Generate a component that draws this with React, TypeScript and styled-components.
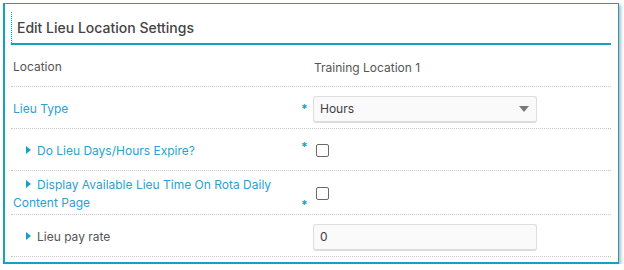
import * as React from "react";
import styled, { createGlobalStyle } from "styled-components";

const teal = "#17a0c6";
const blue = "#2c9fd3";

const GlobalStyle = createGlobalStyle`
  body {
    margin: 0;
    background: #fff;
    font-family: Inter, "Noto Sans", sans-serif;
  }
`;

const Panel = styled.div`
  margin: 3px 0 0 3px;
  width: 616px;
  height: 261px;
  box-sizing: border-box;
  border: 1px solid ${teal};
  border-left-width: 2px;
  border-bottom-width: 2px;
  box-shadow: 2px 2px 3px rgba(0, 0, 0, 0.28);
  padding: 8px 7px 0 6px;
  background: #fff;
`;

const Header = styled.div`
  height: 31px;
  border-bottom: 2px solid ${teal};
  display: flex;
  align-items: center;
`;

const Title = styled.h2`
  margin: 0;
  height: 100%;
  display: flex;
  align-items: center;
  padding-left: 5px;
  border-left: 1px dotted ${teal};
  font-size: 14px;
  font-weight: 500;
  color: #444;
`;

const Row = styled.div<{ $tall?: boolean }>`
  display: grid;
  grid-template-columns: 302px 224px;
  align-items: center;
  padding-top: 3px;
  min-height: ${(p) => (p.$tall ? 40 : 38)}px;
  border-bottom: 1px dotted #c8c8c8;
  font-size: 12px;
`;

const LabelCell = styled.div`
  display: flex;
  align-items: center;
  padding-left: 2px;
  height: 100%;
`;

const LabelText = styled.div<{ $accent?: boolean; $sub?: boolean }>`
  flex: 1;
  line-height: 18.5px;
  color: ${(p) => (p.$accent ? blue : "#555")};
  text-indent: ${(p) => (p.$sub ? "13px" : "0")};
  padding-right: 14px;
`;

const Arrow = styled.span`
  display: inline-block;
  width: 0;
  height: 0;
  border-left: 5px solid ${teal};
  border-top: 4px solid transparent;
  border-bottom: 4px solid transparent;
  margin-right: 6px;
  vertical-align: 0.5px;
  text-indent: 0;
`;

const Star = styled.span<{ $at?: "top" | "bottom" }>`
  width: 12px;
  color: ${teal};
  font-size: 12px;
  font-weight: 700;
  align-self: ${(p) => (p.$at === "bottom" ? "flex-end" : "center")};
  margin-top: ${(p) => (p.$at === "top" ? "-8px" : "0")};
  margin-bottom: ${(p) => (p.$at === "bottom" ? "3px" : "0")};
  line-height: 12px;
`;

const Value = styled.div`
  color: #555;
  padding-left: 1px;
`;

const Field = styled.div`
  height: 27px;
  box-sizing: border-box;
  background: #fafafa;
  border: 1px solid #dedede;
  border-bottom: 2px solid #dcdcdc;
  border-radius: 3px;
  display: flex;
  align-items: center;
  justify-content: space-between;
  padding: 0 7px 0 6px;
  font-size: 12px;
  color: #3d3d4a;
`;

const Caret = styled.span`
  width: 0;
  height: 0;
  border-top: 6px solid #7a7a7a;
  border-left: 5px solid transparent;
  border-right: 5px solid transparent;
`;

const Check = styled.span`
  display: block;
  width: 13px;
  height: 13px;
  box-sizing: border-box;
  border: 1px solid #6a6a6a;
  border-radius: 2px;
  margin: -2px 0 0 3px;
  background: #fff;
`;

export default function App() {
  return (
    <Panel>
      <GlobalStyle />
      <Header>
        <Title>Edit Lieu Location Settings</Title>
      </Header>
      <Row>
        <LabelCell>
          <LabelText>Location</LabelText>
        </LabelCell>
        <Value>Training Location 1</Value>
      </Row>
      <Row>
        <LabelCell>
          <LabelText $accent>Lieu Type</LabelText>
          <Star>*</Star>
        </LabelCell>
        <Field>
          Hours
          <Caret />
        </Field>
      </Row>
      <Row>
        <LabelCell>
          <LabelText $accent $sub>
            <Arrow />
            Do Lieu Days/Hours Expire?
          </LabelText>
          <Star $at="top">*</Star>
        </LabelCell>
        <Check />
      </Row>
      <Row $tall>
        <LabelCell>
          <LabelText $accent $sub>
            <Arrow />
            Display Available Lieu Time On Rota Daily Content Page
          </LabelText>
          <Star $at="bottom">*</Star>
        </LabelCell>
        <Check />
      </Row>
      <Row>
        <LabelCell>
          <LabelText $sub>
            <Arrow />
            Lieu pay rate
          </LabelText>
        </LabelCell>
        <Field>0</Field>
      </Row>
    </Panel>
  );
}
